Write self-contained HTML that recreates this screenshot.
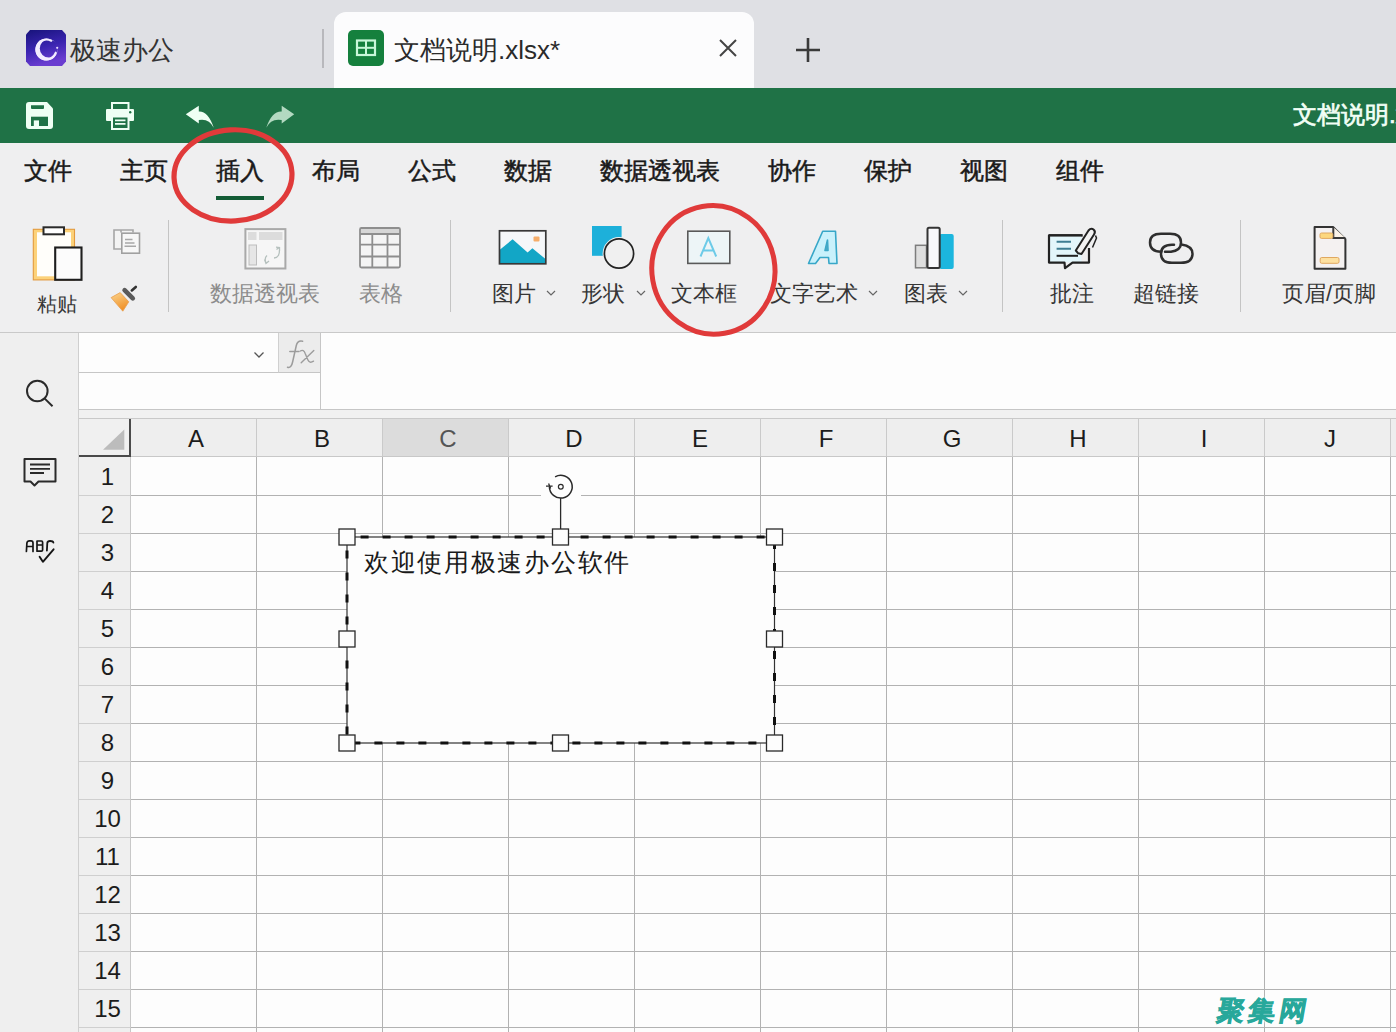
<!DOCTYPE html>
<html><head><meta charset="utf-8">
<style>
*{box-sizing:border-box;margin:0;padding:0}
html,body{width:1396px;height:1032px;overflow:hidden;background:#fdfdfd;font-family:"Liberation Sans",sans-serif;color:#222}
.a{position:absolute}
#tabbar{left:0;top:0;width:1396px;height:88px;background:#dfe0e4}
#green{left:0;top:88px;width:1396px;height:55px;background:#1f7246}
#menu{left:0;top:143px;width:1396px;height:190px;background:#efeff0;border-bottom:1px solid #c9c9c9}
.mi{position:absolute;top:155px;font-size:24px;line-height:32px;font-weight:400;-webkit-text-stroke:0.5px #1a1a1a;color:#1a1a1a;white-space:nowrap}
.rl{position:absolute;top:280px;font-size:22px;line-height:28px;color:#363636;white-space:nowrap}
.rl.g{color:#8c8c8c}
.sep{position:absolute;width:1px;background:#c4c4c4}
.chev{position:absolute;top:290px;width:10px;height:6px}
#side{left:0;top:333px;width:79px;height:699px;background:#efefef;border-right:1px solid #cfcfcf}
.ch{position:absolute;top:419px;width:126px;padding-left:5px;height:37px;border-right:1px solid #cacaca;text-align:center;font-size:24px;line-height:40px;color:#1c1c1c}
.rh{position:absolute;left:79px;width:52px;height:37px;text-align:center;font-size:24px;line-height:40px;color:#1c1c1c;padding-left:5px}
</style></head><body>
<div id="tabbar" class="a"></div>
<div id="green" class="a"></div>
<div id="menu" class="a"></div>
<div id="side" class="a"></div>

<!-- tab bar -->
<svg class="a" style="left:26px;top:30px" width="40" height="36" viewBox="0 0 40 36">
<defs><linearGradient id="lg1" x1="0" y1="0" x2="0.3" y2="1"><stop offset="0" stop-color="#17137a"/><stop offset="0.55" stop-color="#3a24b0"/><stop offset="1" stop-color="#6a3dd0"/></linearGradient></defs>
<path d="M4 0H36L40 4.5V31.5L36 36H4L0 31.5V4.5Z" fill="url(#lg1)"/>
<mask id="cm"><rect width="40" height="36" fill="#fff"/><circle cx="22.9" cy="18.5" r="9.1" fill="#000"/></mask>
<circle cx="20.5" cy="19.5" r="11" fill="#f3ecff" mask="url(#cm)"/>
<path d="M25.3 10.8A10 10 0 1 0 29.8 22.6" fill="none" stroke="#f3ecff" stroke-width="2" stroke-linecap="round"/>
<circle cx="31.2" cy="17.8" r="1.1" fill="#e6dcff"/>
</svg>
<div class="a" style="left:70px;top:32px;font-size:26px;line-height:36px;color:#333">极速办公</div>
<div class="a" style="left:322px;top:29px;width:2px;height:39px;background:#b8b8bc"></div>
<div class="a" style="left:334px;top:12px;width:420px;height:76px;background:#fcfcfd;border-radius:12px 12px 0 0"></div>
<svg class="a" style="left:348px;top:30px" width="36" height="36" viewBox="0 0 36 36">
<rect x="0" y="0" width="36" height="36" rx="5" fill="#15803d"/>
<rect x="9" y="10.5" width="18" height="14.5" fill="none" stroke="#c9f7d9" stroke-width="2.2"/>
<line x1="18" y1="10" x2="18" y2="26" stroke="#c9f7d9" stroke-width="2"/>
<line x1="8" y1="17.8" x2="28" y2="17.8" stroke="#c9f7d9" stroke-width="2"/>
</svg>
<div class="a" style="left:394px;top:32px;font-size:26px;line-height:36px;color:#2a2a2a">文档说明.xlsx*</div>
<svg class="a" style="left:718px;top:38px" width="20" height="20" viewBox="0 0 20 20"><path d="M2 2L18 18M18 2L2 18" stroke="#444" stroke-width="2"/></svg>
<svg class="a" style="left:796px;top:38px" width="24" height="24" viewBox="0 0 24 24"><path d="M12 0V24M0 12H24" stroke="#3a3a3a" stroke-width="2.6"/></svg>


<!-- green bar icons -->
<svg class="a" style="left:26px;top:102px" width="28" height="28" viewBox="0 0 28 28">
<path d="M3 0H21L27 6.5V24Q27 27 24 27H3Q0 27 0 24V3Q0 0 3 0Z" fill="#effff4"/>
<path d="M5 3.3H18V6Q18 7 17 7H6Q5 7 5 6Z" fill="#1f7246"/>
<rect x="5" y="14.7" width="17" height="9.3" fill="#1f7246"/>
<rect x="7.8" y="18.4" width="5.2" height="5.6" fill="#effff4"/>
</svg>
<svg class="a" style="left:106px;top:102px" width="28" height="28" viewBox="0 0 28 28">
<rect x="6" y="1" width="16.5" height="7" fill="none" stroke="#effff4" stroke-width="2"/>
<rect x="0" y="7" width="28" height="12" rx="1" fill="#effff4"/>
<circle cx="24.2" cy="10.3" r="1.2" fill="#1f7246"/>
<rect x="6" y="14.5" width="16.5" height="12.5" fill="#1f7246" stroke="#effff4" stroke-width="2"/>
<path d="M9 18.3H19.5M9 21.8H19.5" stroke="#effff4" stroke-width="1.8"/>
</svg>
<svg class="a" style="left:184px;top:104px" width="32" height="26" viewBox="0 0 32 26">
<path d="M1.8 10.2L14.8 1.8V7.6Q24 7 29.7 23.7Q25 14 14.8 16V19.5Z" fill="#effff4"/>
</svg>
<svg class="a" style="left:264px;top:104px" width="32" height="26" viewBox="0 0 32 26">
<path d="M30.2 10.2L17.7 1.8V7.6Q8 7 2.3 23.7Q7 14 17.7 16V19.5Z" fill="#b3d9c1"/>
</svg>
<div class="a" style="left:1293px;top:99px;font-size:24px;line-height:32px;font-weight:400;-webkit-text-stroke:0.7px #f2fff6;color:#f2fff6;white-space:nowrap">文档说明.xlsx</div>

<!-- menu items -->
<div class="mi" style="left:24px">文件</div>
<div class="mi" style="left:120px">主页</div>
<div class="mi" style="left:216px">插入</div>
<div class="mi" style="left:312px">布局</div>
<div class="mi" style="left:408px">公式</div>
<div class="mi" style="left:504px">数据</div>
<div class="mi" style="left:600px">数据透视表</div>
<div class="mi" style="left:768px">协作</div>
<div class="mi" style="left:864px">保护</div>
<div class="mi" style="left:960px">视图</div>
<div class="mi" style="left:1056px">组件</div>
<div class="a" style="left:216px;top:196px;width:48px;height:4px;background:#135c36"></div>

<!-- ribbon labels -->
<div class="rl" style="left:37px;top:290px;font-size:20px">粘贴</div>
<div class="rl g" style="left:210px">数据透视表</div>
<div class="rl g" style="left:359px">表格</div>
<div class="rl" style="left:492px">图片</div>
<div class="rl" style="left:581px">形状</div>
<div class="rl" style="left:671px">文本框</div>
<div class="rl" style="left:770px">文字艺术</div>
<div class="rl" style="left:904px">图表</div>
<div class="rl" style="left:1050px">批注</div>
<div class="rl" style="left:1133px">超链接</div>
<div class="rl" style="left:1282px">页眉/页脚</div>

<!-- ribbon icons -->
<svg class="a" style="left:30px;top:224px" width="56" height="60" viewBox="30 224 56 60">
<defs><linearGradient id="clipg" x1="0" y1="0" x2="1" y2="0"><stop offset="0" stop-color="#f7b652"/><stop offset="0.25" stop-color="#fff6e3"/><stop offset="0.7" stop-color="#fffaf0"/><stop offset="1" stop-color="#f9c56a"/></linearGradient></defs>
<rect x="33.3" y="229.3" width="41.2" height="50.6" fill="#fcd27a" stroke="#e39a3e" stroke-width="1.1"/>
<rect x="37" y="232.3" width="34" height="44" fill="#fffefa"/>
<rect x="43.5" y="227.3" width="20.5" height="7" fill="#fff" stroke="#2a2a2a" stroke-width="2"/>
<rect x="55.2" y="247.5" width="26.3" height="32.3" fill="#fcfcfc" stroke="#1e1e1e" stroke-width="2.1"/>
</svg>
<svg class="a" style="left:110px;top:225px" width="34" height="32" viewBox="110 225 34 32">
<path d="M121 232.5V230H133V232.5M121 249H114V230H121" fill="#f3f3f3" stroke="#a6a6a6" stroke-width="1.6"/>
<rect x="121.8" y="233.2" width="17.7" height="20" fill="#f7f7f7" stroke="#a0a0a0" stroke-width="1.6"/>
<path d="M125 239.5H132.5M125 243H134.5M124.5 246.3H136" stroke="#a8a8a8" stroke-width="1.4"/>
</svg>
<svg class="a" style="left:106px;top:282px" width="36" height="34" viewBox="106 282 36 34">
<defs><linearGradient id="brg" x1="0" y1="0" x2="0.4" y2="1"><stop offset="0" stop-color="#fbd58e"/><stop offset="1" stop-color="#f0922a"/></linearGradient></defs>
<path d="M111.1 297.6L120.2 292.6L128.8 301.8L122.8 311.2Z" fill="url(#brg)" stroke="#e9a050" stroke-width="0.8" stroke-linejoin="round"/>
<path d="M124.6 290.2L132.8 298.4" stroke="#5a5a5a" stroke-width="4.6" stroke-linecap="round"/>
<path d="M131.8 290.4L135.8 286.9" stroke="#333" stroke-width="2.6" stroke-linecap="round"/>
</svg>
<svg class="a" style="left:242px;top:226px" width="46" height="45" viewBox="242 226 46 45">
<rect x="245.4" y="229.1" width="40" height="39.4" fill="#f6f6f6" stroke="#a9a9a9" stroke-width="2"/>
<rect x="248" y="232" width="8.5" height="8" fill="#dcdcdc"/>
<rect x="259" y="232" width="23.5" height="8" fill="#dcdcdc"/>
<rect x="249" y="245" width="7.5" height="20" fill="#e6e6e6" stroke="#bdbdbd" stroke-width="1"/>
<path d="M279 247.5L276.5 249.5M276 247.2L279.5 247.5V251M279.5 248Q280 258 274 258M266 263Q264 258 267 255.5M264.5 259.5L266 263.5L269 261" fill="none" stroke="#b5c0bd" stroke-width="1.3"/>
</svg>
<svg class="a" style="left:357px;top:225px" width="46" height="46" viewBox="357 225 46 46">
<rect x="360" y="228" width="40" height="39.5" rx="1.5" fill="#f4f4f4" stroke="#8e8e8e" stroke-width="1.8"/>
<rect x="361" y="229" width="38" height="4.5" fill="#d6d6d6"/>
<path d="M360 234H400M360 244.6H400M360 256.5H400M372.3 234V267.5M387.5 234V267.5" stroke="#8e8e8e" stroke-width="1.8"/>
</svg>
<svg class="a" style="left:496px;top:227px" width="54" height="40" viewBox="496 227 54 40">
<rect x="499.5" y="230.8" width="46.3" height="33" fill="#f5f7f9"/>
<path d="M499.5 250L512.6 239.3L527.6 252.5L532.4 248.2L545.8 259.3V263.8H499.5Z" fill="#12a6c6"/>
<rect x="533.5" y="236.5" width="6" height="5" rx="1" fill="#f5ad6a"/>
<rect x="499.5" y="230.8" width="46.3" height="33" fill="none" stroke="#383838" stroke-width="1.7"/>
</svg>
<svg class="a" style="left:588px;top:222px" width="50" height="50" viewBox="588 222 50 50">
<rect x="592" y="226" width="29.6" height="29.8" fill="#1db0da"/>
<circle cx="619" cy="253.5" r="16.4" fill="#f0f0f0"/>
<circle cx="619" cy="253.5" r="14.6" fill="#f0f0f0" stroke="#222" stroke-width="1.7"/>
</svg>
<svg class="a" style="left:684px;top:228px" width="50" height="40" viewBox="684 228 50 40">
<rect x="687.8" y="231.2" width="42" height="32.2" fill="#edf5f7" stroke="#595959" stroke-width="1.6"/>
<path d="M700.5 256.5L708.3 238L716.2 256.5M703.2 250.5H713.5" fill="none" stroke="#6ccbe8" stroke-width="2"/>
</svg>
<svg class="a" style="left:804px;top:227px" width="38" height="42" viewBox="804 227 38 42">
<path d="M822.7 231.2L835.5 231.2L837 263.5L829 263.5L828.5 257.5L820 257.5L815.5 263.5L808.5 263.5ZM825 250.5L828 250.5L827.5 240Z" fill="#c9f1fb" fill-rule="evenodd" stroke="#37a7c8" stroke-width="1.6" stroke-linejoin="round"/>
<path d="M825 250.5L828 250.5L827.5 240Z" fill="#44a9c6"/>
</svg>
<svg class="a" style="left:912px;top:224px" width="46" height="48" viewBox="912 224 46 48">
<rect x="915.5" y="245.3" width="11" height="22.5" fill="#dedede" stroke="#7d7d7d" stroke-width="1.5"/>
<rect x="939.4" y="234.1" width="14.3" height="35" rx="2" fill="#1cb6de"/>
<rect x="927.5" y="227.7" width="12.2" height="40.3" rx="1.5" fill="#f8f8fb" stroke="#333" stroke-width="2"/>
</svg>
<svg class="a" style="left:1044px;top:224px" width="56" height="48" viewBox="1044 224 56 48">
<path d="M1049 235.3H1082.5" stroke="#222" stroke-width="2.2"/>
<rect x="1049.5" y="236.3" width="32" height="26" fill="#e3f6fb"/>
<path d="M1082.5 235.3H1049V262.6H1064.5L1065 268.2L1072.5 262.6H1089V248" fill="none" stroke="#222" stroke-width="2.2" stroke-linejoin="round"/>
<path d="M1056.6 241.8H1071M1056.6 248.7H1071" stroke="#3f7e93" stroke-width="2"/>
<path d="M1056.6 255.8H1078" stroke="#222" stroke-width="2"/>
<path d="M1078.2 253.3L1075.8 250.5L1088.5 230.5Q1091 227.5 1093.5 229.5Q1096 231.5 1094 234.5L1081.5 254Z" fill="#f2f2f2" stroke="#222" stroke-width="2" stroke-linejoin="round"/>
<path d="M1095.5 235.5L1096.5 238L1092.5 247.5" fill="none" stroke="#222" stroke-width="1.5"/>
</svg>
<svg class="a" style="left:1144px;top:228px" width="54" height="40" viewBox="1144 228 54 40">
<path d="M1161 251.8Q1150 251.5 1150 242.5Q1150 233.8 1161 233.8H1170Q1181 233.8 1181 242.5Q1181 250.5 1171 251.8H1165" fill="none" stroke="#2e2e2e" stroke-width="2.5" stroke-linecap="round"/>
<path d="M1181.5 244.5Q1192.5 246 1192.5 253.8Q1192.5 262.8 1181 262.8H1172Q1161 262.8 1161 253.8Q1161 244.8 1172 244.8H1174" fill="none" stroke="#2e2e2e" stroke-width="2.5" stroke-linecap="round"/>
</svg>
<svg class="a" style="left:1310px;top:223px" width="40" height="50" viewBox="1310 223 40 50">
<path d="M1314.6 227.1H1333.3L1345.4 239.1V268.8H1314.6Z" fill="#f4f1f1" stroke="#333" stroke-width="2" stroke-linejoin="round"/>
<path d="M1333.3 227.1V238.1H1345.4" fill="#fbf3e8" stroke="#3a3a3a" stroke-width="2"/>
<rect x="1320" y="233" width="12.8" height="5.4" rx="1.5" fill="#fcd77e" stroke="#e0a860" stroke-width="1"/>
<rect x="1320.2" y="257.5" width="18.8" height="5.8" rx="1.5" fill="#fde0a0" stroke="#e0a860" stroke-width="1"/>
</svg>
<svg class="chev" style="left:546px" viewBox="0 0 10 6"><path d="M1 1L5 5L9 1" fill="none" stroke="#666" stroke-width="1.2"/></svg>
<svg class="chev" style="left:636px" viewBox="0 0 10 6"><path d="M1 1L5 5L9 1" fill="none" stroke="#666" stroke-width="1.2"/></svg>
<svg class="chev" style="left:868px" viewBox="0 0 10 6"><path d="M1 1L5 5L9 1" fill="none" stroke="#666" stroke-width="1.2"/></svg>
<svg class="chev" style="left:958px" viewBox="0 0 10 6"><path d="M1 1L5 5L9 1" fill="none" stroke="#666" stroke-width="1.2"/></svg>

<div class="sep" style="left:168px;top:220px;height:92px"></div>
<div class="sep" style="left:450px;top:220px;height:92px"></div>
<div class="sep" style="left:1002px;top:220px;height:92px"></div>
<div class="sep" style="left:1240px;top:220px;height:92px"></div>


<!-- formula bar -->
<div class="a" style="left:79px;top:333px;width:1317px;height:77px;background:#fdfdfd;border-bottom:1px solid #c6c6c6"></div>
<div class="a" style="left:79px;top:333px;width:200px;height:40px;border-bottom:1px solid #c6c6c6;border-right:1px solid #d0d0d0"></div>
<svg class="a" style="left:253px;top:351px" width="12" height="8" viewBox="0 0 12 8"><path d="M1.5 1.5L6 6L10.5 1.5" fill="none" stroke="#555" stroke-width="1.3"/></svg>
<div class="a" style="left:279px;top:333px;width:41px;height:40px;background:#ececec;border-bottom:1px solid #c6c6c6"></div>
<div class="a" style="left:320px;top:333px;width:1px;height:77px;background:#c6c6c6"></div>
<svg class="a" style="left:280px;top:335px" width="40" height="36" viewBox="280 335 40 36">
<path d="M287.5 367.3Q291.3 368.5 292.6 362L296.3 345.5Q297.6 340.2 302.6 341.3M289.8 351.6H299" fill="none" stroke="#9c9c9c" stroke-width="1.5" stroke-linecap="round"/>
<path d="M300.3 351Q303.6 349 305.2 353.5L307.8 359.8Q309.5 363.8 313.5 361.2M313.8 350.5L301.2 362.8" fill="none" stroke="#9c9c9c" stroke-width="1.4" stroke-linecap="round"/>
</svg>
<div class="a" style="left:79px;top:410px;width:1317px;height:9px;background:#f1f1f1;border-bottom:1px solid #c9c9c9"></div>


<!-- grid -->
<div class="a" style="left:79px;top:419px;width:1317px;height:38px;background:#eeeeee;border-bottom:1px solid #c8c8c8"></div>
<div class="a" style="left:79px;top:457px;width:52px;height:575px;background:#efefef"></div>
<div class="a" style="left:131px;top:457px;width:1265px;height:575px;background:repeating-linear-gradient(to right,transparent 0 125px,#b2b2b2 125px 126px),repeating-linear-gradient(to bottom,transparent 0 37px,#b2b2b2 37px 38px);background-position:0 0,0 1px"></div>
<div class="a" style="left:79px;top:457px;width:52px;height:575px;background:repeating-linear-gradient(to bottom,transparent 0 37px,#cfcfcf 37px 38px);background-position:0 1px;border-right:1px solid #c8c8c8"></div>
<div class="ch" style="left:131px;">A</div>
<div class="ch" style="left:257px;">B</div>
<div class="ch" style="left:383px;background:#dcdcdc;color:#555;">C</div>
<div class="ch" style="left:509px;">D</div>
<div class="ch" style="left:635px;">E</div>
<div class="ch" style="left:761px;">F</div>
<div class="ch" style="left:887px;">G</div>
<div class="ch" style="left:1013px;">H</div>
<div class="ch" style="left:1139px;">I</div>
<div class="ch" style="left:1265px;">J</div>
<div class="rh" style="top:457px">1</div>
<div class="rh" style="top:495px">2</div>
<div class="rh" style="top:533px">3</div>
<div class="rh" style="top:571px">4</div>
<div class="rh" style="top:609px">5</div>
<div class="rh" style="top:647px">6</div>
<div class="rh" style="top:685px">7</div>
<div class="rh" style="top:723px">8</div>
<div class="rh" style="top:761px">9</div>
<div class="rh" style="top:799px">10</div>
<div class="rh" style="top:837px">11</div>
<div class="rh" style="top:875px">12</div>
<div class="rh" style="top:913px">13</div>
<div class="rh" style="top:951px">14</div>
<div class="rh" style="top:989px">15</div>

<div class="a" style="left:79px;top:419px;width:52px;height:38px;border-right:2px solid #4a4a4a;border-bottom:2px solid #4a4a4a;background:#f0f0f0"></div>
<svg class="a" style="left:100px;top:427px" width="28" height="26" viewBox="100 427 28 26"><path d="M124.3 429.6V449.7H103Z" fill="#bcbcbc"/></svg>

<!-- sidebar icons -->
<svg class="a" style="left:20px;top:374px" width="40" height="40" viewBox="20 374 40 40">
<circle cx="37.3" cy="391" r="10.3" fill="none" stroke="#2a2a2a" stroke-width="2"/>
<path d="M44.5 398.4L52.5 406.2" stroke="#2a2a2a" stroke-width="2"/>
</svg>
<svg class="a" style="left:20px;top:452px" width="40" height="40" viewBox="20 452 40 40">
<path d="M24.5 459H55.5V481.5H38.5L34.5 485.5L30.5 481.5H24.5Z" fill="none" stroke="#2a2a2a" stroke-width="2" stroke-linejoin="round"/>
<path d="M30 464.5H50M30 468.8H50M30 473H44" stroke="#2a2a2a" stroke-width="1.8"/>
</svg>
<svg class="a" style="left:20px;top:535px" width="40" height="32" viewBox="20 535 40 32">
<path d="M26.4 551.5L26.9 543Q27.2 540.8 29.5 540.8H31Q33 540.8 33 543V551.5M27 546.5H32.8" fill="none" stroke="#161616" stroke-width="1.7" stroke-linecap="round"/>
<path d="M37 541H41.5Q42.6 541 42.6 542.3V550Q42.6 551.2 41.3 551.2H37ZM37 545H42.3" fill="none" stroke="#161616" stroke-width="1.7" stroke-linejoin="round"/>
<path d="M46.9 550.5L47.3 543Q47.6 541 50 541Q53 541 53.4 542.6" fill="none" stroke="#161616" stroke-width="1.8" stroke-linecap="round"/>
<path d="M39.6 556.7L42.9 561.8L53.6 549.3" fill="none" stroke="#161616" stroke-width="1.9" stroke-linecap="round" stroke-linejoin="round"/>
</svg>


<!-- textbox -->
<div class="a" style="left:347px;top:537px;width:428px;height:206px;background:#fdfdfd"></div>
<div class="a" style="left:541px;top:470px;width:40px;height:34px;background:#fdfdfd"></div>
<svg class="a" style="left:330px;top:460px" width="470" height="300" viewBox="330 460 470 300">
<rect x="347" y="537" width="427.5" height="206" fill="none" stroke="#333" stroke-width="1.2"/>
<rect x="347" y="537" width="427.5" height="206" fill="none" stroke="#111" stroke-width="3" stroke-dasharray="8 14" stroke-dashoffset="8.4"/>
<path d="M560.6 498.1V529" stroke="#2a2a2a" stroke-width="1.3"/>
<path d="M555.1 476.8A11.4 11.4 0 1 1 549.4 486.7" fill="none" stroke="#2a2a2a" stroke-width="1.5"/>
<path d="M546 486.2H552.6M548.6 483.6L550.6 488.6" fill="none" stroke="#2a2a2a" stroke-width="1.3"/>
<circle cx="560.8" cy="486.7" r="2.4" fill="none" stroke="#2a2a2a" stroke-width="1.2"/>
<rect x="339" y="529" width="16" height="16" fill="#fdfdfd" stroke="#2a2a2a" stroke-width="1.3"/>
<rect x="552.5" y="529" width="16" height="16" fill="#fdfdfd" stroke="#2a2a2a" stroke-width="1.3"/>
<rect x="766.5" y="529" width="16" height="16" fill="#fdfdfd" stroke="#2a2a2a" stroke-width="1.3"/>
<rect x="339" y="631" width="16" height="16" fill="#fdfdfd" stroke="#2a2a2a" stroke-width="1.3"/>
<rect x="766.5" y="631" width="16" height="16" fill="#fdfdfd" stroke="#2a2a2a" stroke-width="1.3"/>
<rect x="339" y="735" width="16" height="16" fill="#fdfdfd" stroke="#2a2a2a" stroke-width="1.3"/>
<rect x="552.5" y="735" width="16" height="16" fill="#fdfdfd" stroke="#2a2a2a" stroke-width="1.3"/>
<rect x="766.5" y="735" width="16" height="16" fill="#fdfdfd" stroke="#2a2a2a" stroke-width="1.3"/>
</svg>
<div class="a" style="left:364px;top:545px;font-size:25px;line-height:34px;letter-spacing:1.7px;color:#1a1a1a;white-space:nowrap">欢迎使用极速办公软件</div>

<!-- red annotations -->
<svg class="a" style="left:0;top:0" width="1396" height="400" viewBox="0 0 1396 400">
<ellipse cx="233" cy="175.4" rx="59" ry="45.6" fill="none" stroke="#e03a3a" stroke-width="5.2" transform="rotate(-3 233 175.4)"/>
<ellipse cx="713.4" cy="269.9" rx="61.5" ry="64.3" fill="none" stroke="#e03a3a" stroke-width="5" transform="rotate(-10 713.4 269.9)"/>
</svg>

<!-- watermark -->
<div class="a" style="left:1218px;top:994px;font-size:27px;line-height:34px;font-weight:900;color:#28a89b;-webkit-text-stroke:0.7px #28a89b;text-shadow:0 0 3px #fff,0 0 3px #fff,0 0 2px #fff;transform:skewX(-10deg);white-space:nowrap;letter-spacing:4px">聚集网</div>

</body></html>
